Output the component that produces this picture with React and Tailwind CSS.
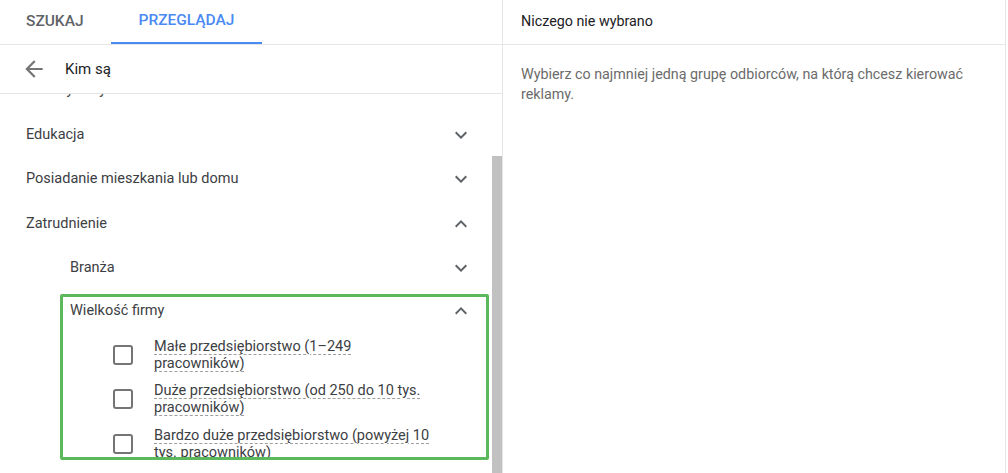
import { useState } from 'react';

const ChevronDown = () => (
  <svg width="24" height="24" viewBox="0 0 24 24" className="fill-[#5f6368]">
    <path d="M16.59 8.59L12 13.17 7.41 8.59 6 10l6 6 6-6z" />
  </svg>
);

const ChevronUp = () => (
  <svg width="24" height="24" viewBox="0 0 24 24" className="fill-[#5f6368]">
    <path d="M12 8l-6 6 1.41 1.41L12 10.83l4.59 4.58L18 14z" />
  </svg>
);

const ArrowBack = () => (
  <svg width="26" height="26" viewBox="0 0 24 24" className="fill-[#757575]">
    <path d="M20 11H7.83l5.59-5.59L12 4l-8 8 8 8 1.41-1.41L7.83 13H20v-2z" />
  </svg>
);

const Row = ({ label, open, nested }) => (
  <div className={`flex h-[44.5px] items-center justify-between pr-[19px] ${nested ? 'pl-[70px]' : 'pl-[26px]'}`}>
    <span>{label}</span>
    {open ? <ChevronUp /> : <ChevronDown />}
  </div>
);

const sizes = [
  ['Małe przedsiębiorstwo (1–249', 'pracowników)'],
  ['Duże przedsiębiorstwo (od 250 do 10 tys.', 'pracowników)'],
  ['Bardzo duże przedsiębiorstwo (powyżej 10', 'tys. pracowników)']
];

const App = () => {
  const [checked, setChecked] = useState([false, false, false]);

  return (
    <div className="flex h-[473px] w-[1008px] overflow-hidden bg-white font-['Roboto',sans-serif] text-[14.5px] text-[#3c4043]">
      <div className="flex w-[503px] flex-col border-r border-[#e6e6e6]">
        <div className="flex h-[45px] shrink-0 border-b border-[#e6e6e6] text-[15.5px] font-medium uppercase">
          <div className="flex w-[111px] items-center pl-[26px] text-[#5f6368]">Szukaj</div>
          <div className="flex w-[151px] items-center justify-center border-b-2 border-[#4a8af4] text-[#4a8af4]">
            Przeglądaj
          </div>
        </div>

        <div className="flex h-[49px] shrink-0 items-center border-b border-[#e6e6e6] pl-[21px]">
          <div className="flex w-[44px] shrink-0 items-center">
            <ArrowBack />
          </div>
          <span className="text-[15px] text-[#202124]">Kim są</span>
        </div>

        <div className="flex min-h-0 flex-1">
          <div className="min-w-0 flex-1 overflow-hidden">
            <div className="-mt-[26px]">
              <Row label="Stan cywilny" />
              <Row label="Edukacja" />
              <Row label="Posiadanie mieszkania lub domu" />
              <Row label="Zatrudnienie" open />
              <Row label="Branża" nested />

              <div className="ml-[60px] mr-[3px] mt-[3px] h-[166px] overflow-hidden rounded-[2px] border-[3px] border-[#5cb85c]">
                <div className="flex h-[28px] items-center justify-between pl-[7px] pr-[13px]">
                  <span>Wielkość firmy</span>
                  <ChevronUp />
                </div>
                <div className="pt-[8px]">
                  {sizes.map((lines, i) => (
                    <label key={i} className="flex h-[44.5px] cursor-pointer items-center">
                      <input
                        type="checkbox"
                        className="sr-only"
                        checked={checked[i]}
                        onChange={() => setChecked((c) => c.map((v, j) => (j === i ? !v : v)))}
                      />
                      <span className="ml-[50px] h-[20px] w-[20px] shrink-0 rounded-[3px] border-2 border-[#757575]" />
                      <span className="ml-[21px] text-[14.5px] leading-[17px] text-[#3c4043]">
                        <span className="underline decoration-[#9e9e9e] decoration-dashed decoration-1 underline-offset-[3px]">
                          {lines[0]}
                          <br />
                          {lines[1]}
                        </span>
                      </span>
                    </label>
                  ))}
                </div>
              </div>
            </div>
          </div>
          <div className="w-[10px] shrink-0 pt-[62px]">
            <div className="h-full bg-[#c1c1c1]" />
          </div>
        </div>
      </div>

      <div className="w-[503px] border-r border-[#e6e6e6]">
        <div className="flex h-[45px] items-center border-b border-[#e6e6e6] pl-[18px] text-[14.3px] text-[#202124]">
          Niczego nie wybrano
        </div>
        <p className="px-[18px] pt-[19px] text-[14.3px] leading-[20px] text-[#6b6b6b]">
          Wybierz co najmniej jedną grupę odbiorców, na którą chcesz kierować reklamy.
        </p>
      </div>
    </div>
  );
};

export default App;
